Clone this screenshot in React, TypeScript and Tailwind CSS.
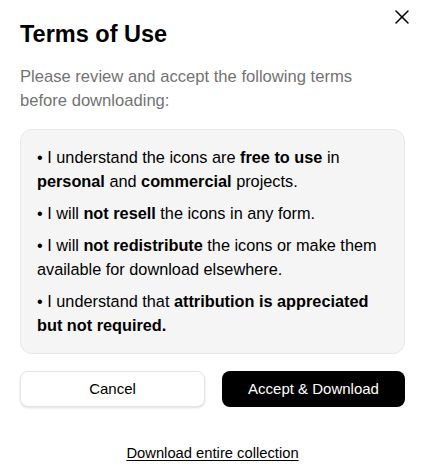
import { X } from "lucide-react";

const Terms = () => {
    return (
        <div className="relative w-[425px] h-[471px] bg-white px-5 pt-[18px] font-['Liberation_Sans',Arial,sans-serif] text-black">
            {/* close button */}
            <button className="absolute top-[5px] left-[390px] text-black">
                <X size={24} strokeWidth={1.5} />
            </button>

            <h2 className="text-[23.5px] leading-8 font-semibold">Terms of Use</h2>
            <p className="mt-[15px] max-w-[350px] text-[16.6px] leading-6 text-[#737373]">
                Please review and accept the following terms before downloading:
            </p>

            <div className="mt-[16px] rounded-xl border border-[#e8e8e8] bg-[#f5f5f5] px-4 pt-[15px] pb-4 text-[16.3px] leading-6 space-y-2">
                <p>
                    • I understand the icons are <b>free to use</b> in <b>personal</b> and <b>commercial</b> projects.
                </p>
                <p>
                    • I will <b>not resell</b> the icons in any form.
                </p>
                <p>
                    • I will <b>not redistribute</b> the icons or make them available for download elsewhere.
                </p>
                <p>
                    • I understand that <b>attribution is appreciated but not required.</b>
                </p>
            </div>

            <div className="mt-[17px] flex gap-[17px]">
                <button className="flex-1 h-9 rounded-lg border border-[#e5e5e5] bg-white shadow-sm text-[15px]">
                    Cancel
                </button>
                <button className="flex-1 h-9 rounded-lg bg-black text-white text-[15px]">Accept &amp; Download</button>
            </div>

            <div className="mt-[34px] text-center">
                <a href="#" className="text-[14.75px] leading-5 font-medium underline underline-offset-2">
                    Download entire collection
                </a>
            </div>
        </div>
    );
};

export default function App() {
    return <Terms />;
}
